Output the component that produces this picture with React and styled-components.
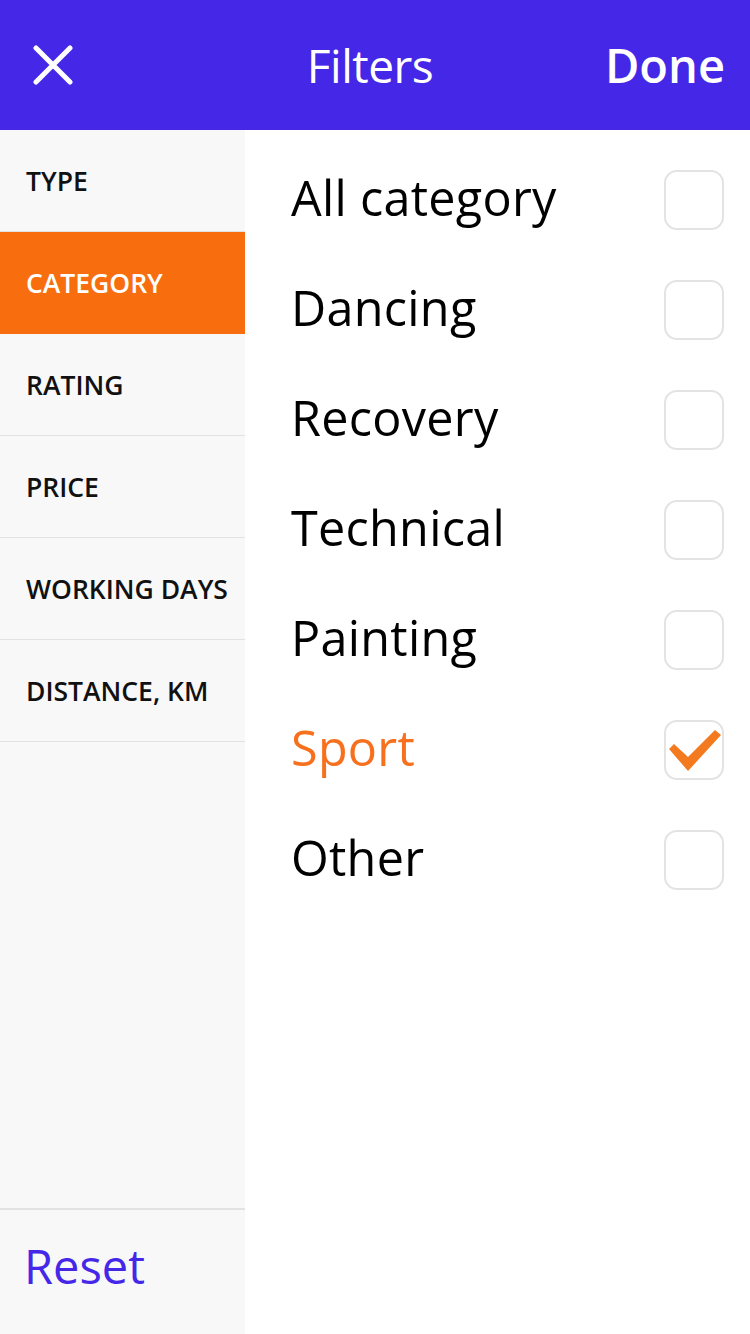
import React, { useState } from "react";
import styled, { createGlobalStyle } from "styled-components";

const Global = createGlobalStyle`
  html, body { margin: 0; padding: 0; }
  body { font-family: "Open Sans", "Noto Sans", sans-serif; background: #fff; }
  #root { height: 100vh; }
`;

const Screen = styled.div`
  height: 1334px;
  width: 750px;
  display: flex;
  flex-direction: column;
  overflow: hidden;
`;

const Header = styled.header`
  height: 130px;
  flex: none;
  background: #4527e8;
  display: grid;
  grid-template-columns: 1fr auto 1fr;
  align-items: center;
  padding: 0 25px;
  color: #fff;
`;

const CloseBtn = styled.button`
  justify-self: start;
  width: 40px;
  height: 40px;
  padding: 0;
  margin-left: 8px;
  border: 0;
  background: none;
  display: flex;
`;

const Title = styled.h1`
  margin: 0 10px 0 0;
  font-size: 46px;
  font-weight: 400;
  letter-spacing: -0.5px;
  color: #fff;
`;

const DoneBtn = styled.button`
  justify-self: end;
  border: 0;
  background: none;
  padding: 0;
  font-family: inherit;
  font-size: 47px;
  font-weight: 600;
  color: #fff;
`;

const Body = styled.div`
  flex: 1;
  display: flex;
  min-height: 0;
`;

const Sidebar = styled.nav`
  width: 245px;
  flex: none;
  background: #f8f8f8;
  display: flex;
  flex-direction: column;
`;

const Tabs = styled.div`
  flex: 1;
`;

const Tab = styled.div`
  height: 102px;
  box-sizing: border-box;
  display: flex;
  align-items: center;
  padding-left: 26px;
  font-size: 26.5px;
  font-weight: 600;
  letter-spacing: 0;
  white-space: nowrap;
  color: ${(p) => (p.$active ? "#fff" : "#111")};
  background: ${(p) => (p.$active ? "#f86e0f" : "transparent")};
  border-bottom: 1px solid ${(p) => (p.$active ? "#f86e0f" : "#e2e2e2")};
`;

const ResetArea = styled.div`
  height: 126px;
  border-top: 2px solid #e2e2e2;
  box-sizing: border-box;
  display: flex;
  align-items: center;
  padding-left: 24px;
`;

const ResetBtn = styled.button`
  border: 0;
  background: none;
  padding: 0;
  font-family: inherit;
  font-size: 47px;
  font-weight: 400;
  color: #4527e8;
  margin-top: -12px;
`;

const List = styled.ul`
  list-style: none;
  margin: 0;
  padding: 15px 26px 0 46px;
  flex: 1;
`;

const Item = styled.li`
  height: 110px;
  display: flex;
  align-items: center;
  justify-content: space-between;
`;

const Label = styled.span`
  font-size: 48.5px;
  font-weight: 400;
  letter-spacing: 0.3px;
  color: ${(p) => (p.$checked ? "#f7701e" : "#000")};
  margin-top: -6px;
`;

const Box = styled.span`
  width: 60px;
  height: 60px;
  box-sizing: border-box;
  border: 2px solid #e3e3e3;
  border-radius: 13px;
  position: relative;
  background: #fff;
`;

const Check = styled.svg`
  position: absolute;
  left: -2px;
  top: -2px;
  overflow: visible;
`;

const tabs = ["TYPE", "CATEGORY", "RATING", "PRICE", "WORKING DAYS", "DISTANCE, KM"];
const items = ["All category", "Dancing", "Recovery", "Technical", "Painting", "Sport", "Other"];

export default function App() {
  const [checked] = useState("Sport");
  return (
    <Screen>
      <Global />
      <Header>
        <CloseBtn aria-label="Close">
          <svg width="40" height="40" viewBox="0 0 40 40">
            <path d="M3 3 L37 37 M37 3 L3 37" stroke="#fff" strokeWidth="5" strokeLinecap="round" />
          </svg>
        </CloseBtn>
        <Title>Filters</Title>
        <DoneBtn>Done</DoneBtn>
      </Header>
      <Body>
        <Sidebar>
          <Tabs>
            {tabs.map((t) => (
              <Tab key={t} $active={t === "CATEGORY"}>{t}</Tab>
            ))}
          </Tabs>
          <ResetArea>
            <ResetBtn>Reset</ResetBtn>
          </ResetArea>
        </Sidebar>
        <List>
          {items.map((it) => (
            <Item key={it}>
              <Label $checked={it === checked}>{it}</Label>
              <Box>
                {it === checked && (
                  <Check width="60" height="60" viewBox="0 0 60 60">
                    <path d="M5 29 L10 24 L24 37 L51 10 L57 15 L24 51 Z" fill="#f47a20" />
                  </Check>
                )}
              </Box>
            </Item>
          ))}
        </List>
      </Body>
    </Screen>
  );
}
